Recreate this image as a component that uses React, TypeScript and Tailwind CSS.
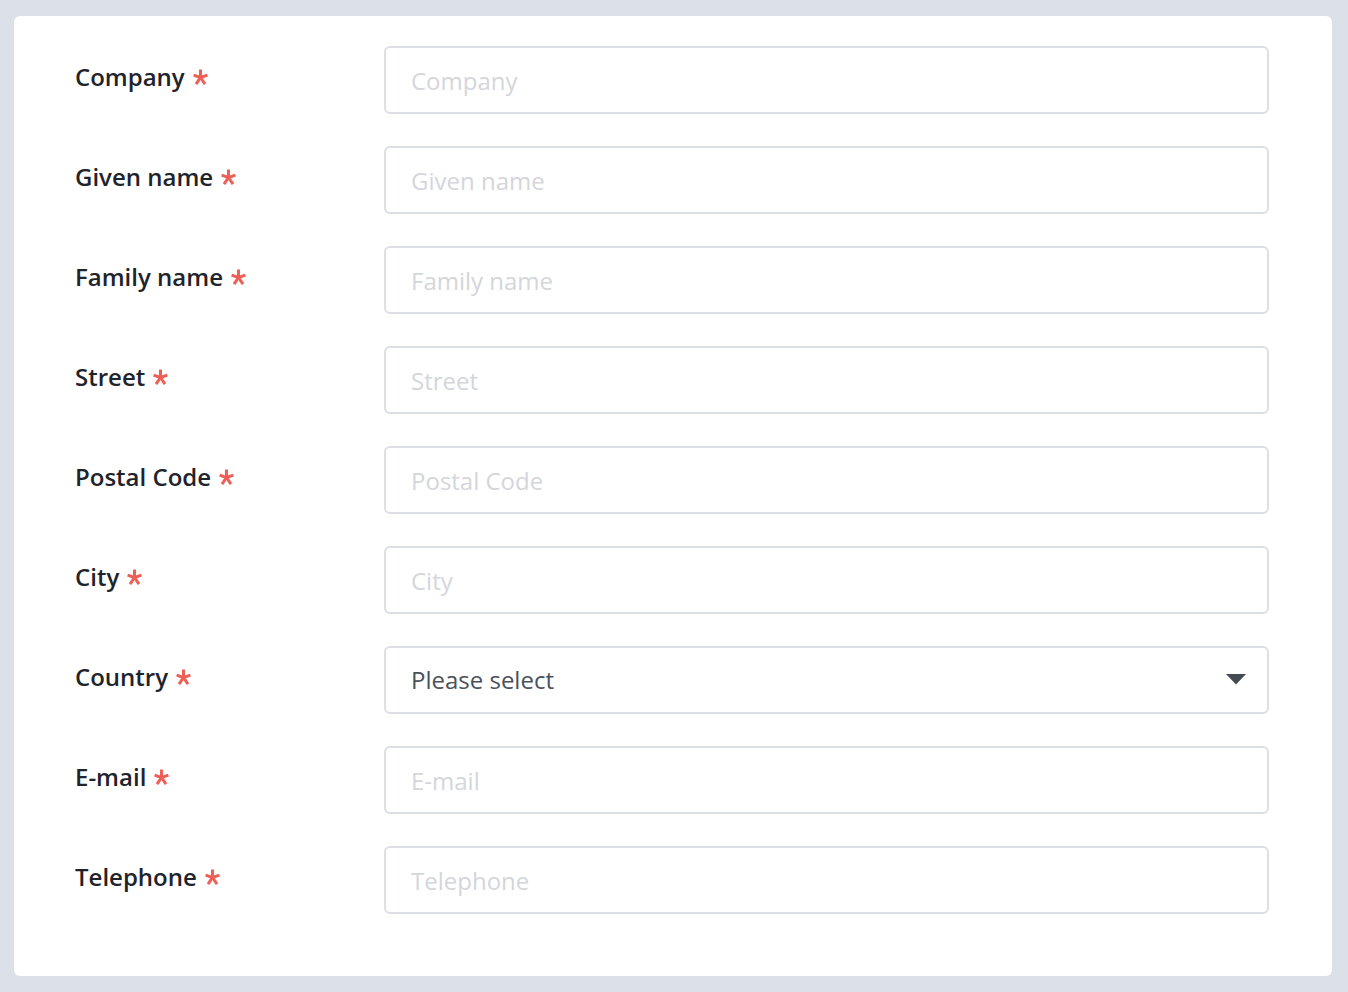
import React from "react"

const fields = [
  { label: "Company", type: "text" },
  { label: "Given name", type: "text" },
  { label: "Family name", type: "text" },
  { label: "Street", type: "text" },
  { label: "Postal Code", type: "text" },
  { label: "City", type: "text" },
  { label: "Country", type: "select" },
  { label: "E-mail", type: "email" },
  { label: "Telephone", type: "tel" },
]

function Asterisk() {
  return (
    <svg width="15" height="16" viewBox="0 0 15 16" className="ml-[8px] mt-[7px] shrink-0" aria-hidden="true">
      <g stroke="#ee5f56" strokeWidth="3" strokeLinecap="butt">
        <line x1="7.5" y1="0.5" x2="7.5" y2="8.5" />
        <line x1="7.5" y1="8.5" x2="0.6" y2="6.2" />
        <line x1="7.5" y1="8.5" x2="14.4" y2="6.2" />
        <line x1="7.5" y1="8.5" x2="3" y2="15.2" />
        <line x1="7.5" y1="8.5" x2="12" y2="15.2" />
      </g>
    </svg>
  )
}

export default function App() {
  return (
    <div className="min-h-screen bg-[#dce0e8] pl-[14px] pr-[16px] pt-[16px] pb-[16px] font-['Open_Sans',sans-serif]">
      <div className="bg-white rounded-[6px] pl-[61px] pr-[63px] pt-[30px] pb-[62px] flex flex-col gap-[32px]">
        {fields.map((f) => (
          <div key={f.label} className="flex items-start">
            <label className="w-[309px] shrink-0 pt-[16px] flex items-start text-[24px] leading-[30px] font-semibold text-[#1f242c]">
              {f.label}
              <Asterisk />
            </label>
            {f.type === "select" ? (
              <div className="relative flex-1">
                <select className="appearance-none w-full h-[68px] border-2 border-[#dcdfe4] rounded-[6px] pl-[25px] pr-[50px] text-[24px] leading-[30px] text-[#4a515b] bg-white outline-none">
                  <option>Please select</option>
                </select>
                <svg width="20" height="11" viewBox="0 0 20 11" className="absolute right-[23px] top-[28px] pointer-events-none" aria-hidden="true">
                  <path d="M0 0 H20 L10 10.5 Z" fill="#454b54" />
                </svg>
              </div>
            ) : (
              <input
                type={f.type}
                placeholder={f.label}
                className="flex-1 h-[68px] border-2 border-[#dcdfe4] rounded-[6px] px-[25px] text-[24px] leading-[30px] text-[#4a515b] placeholder:text-[#d3d6db] bg-white outline-none"
              />
            )}
          </div>
        ))}
      </div>
    </div>
  )
}
